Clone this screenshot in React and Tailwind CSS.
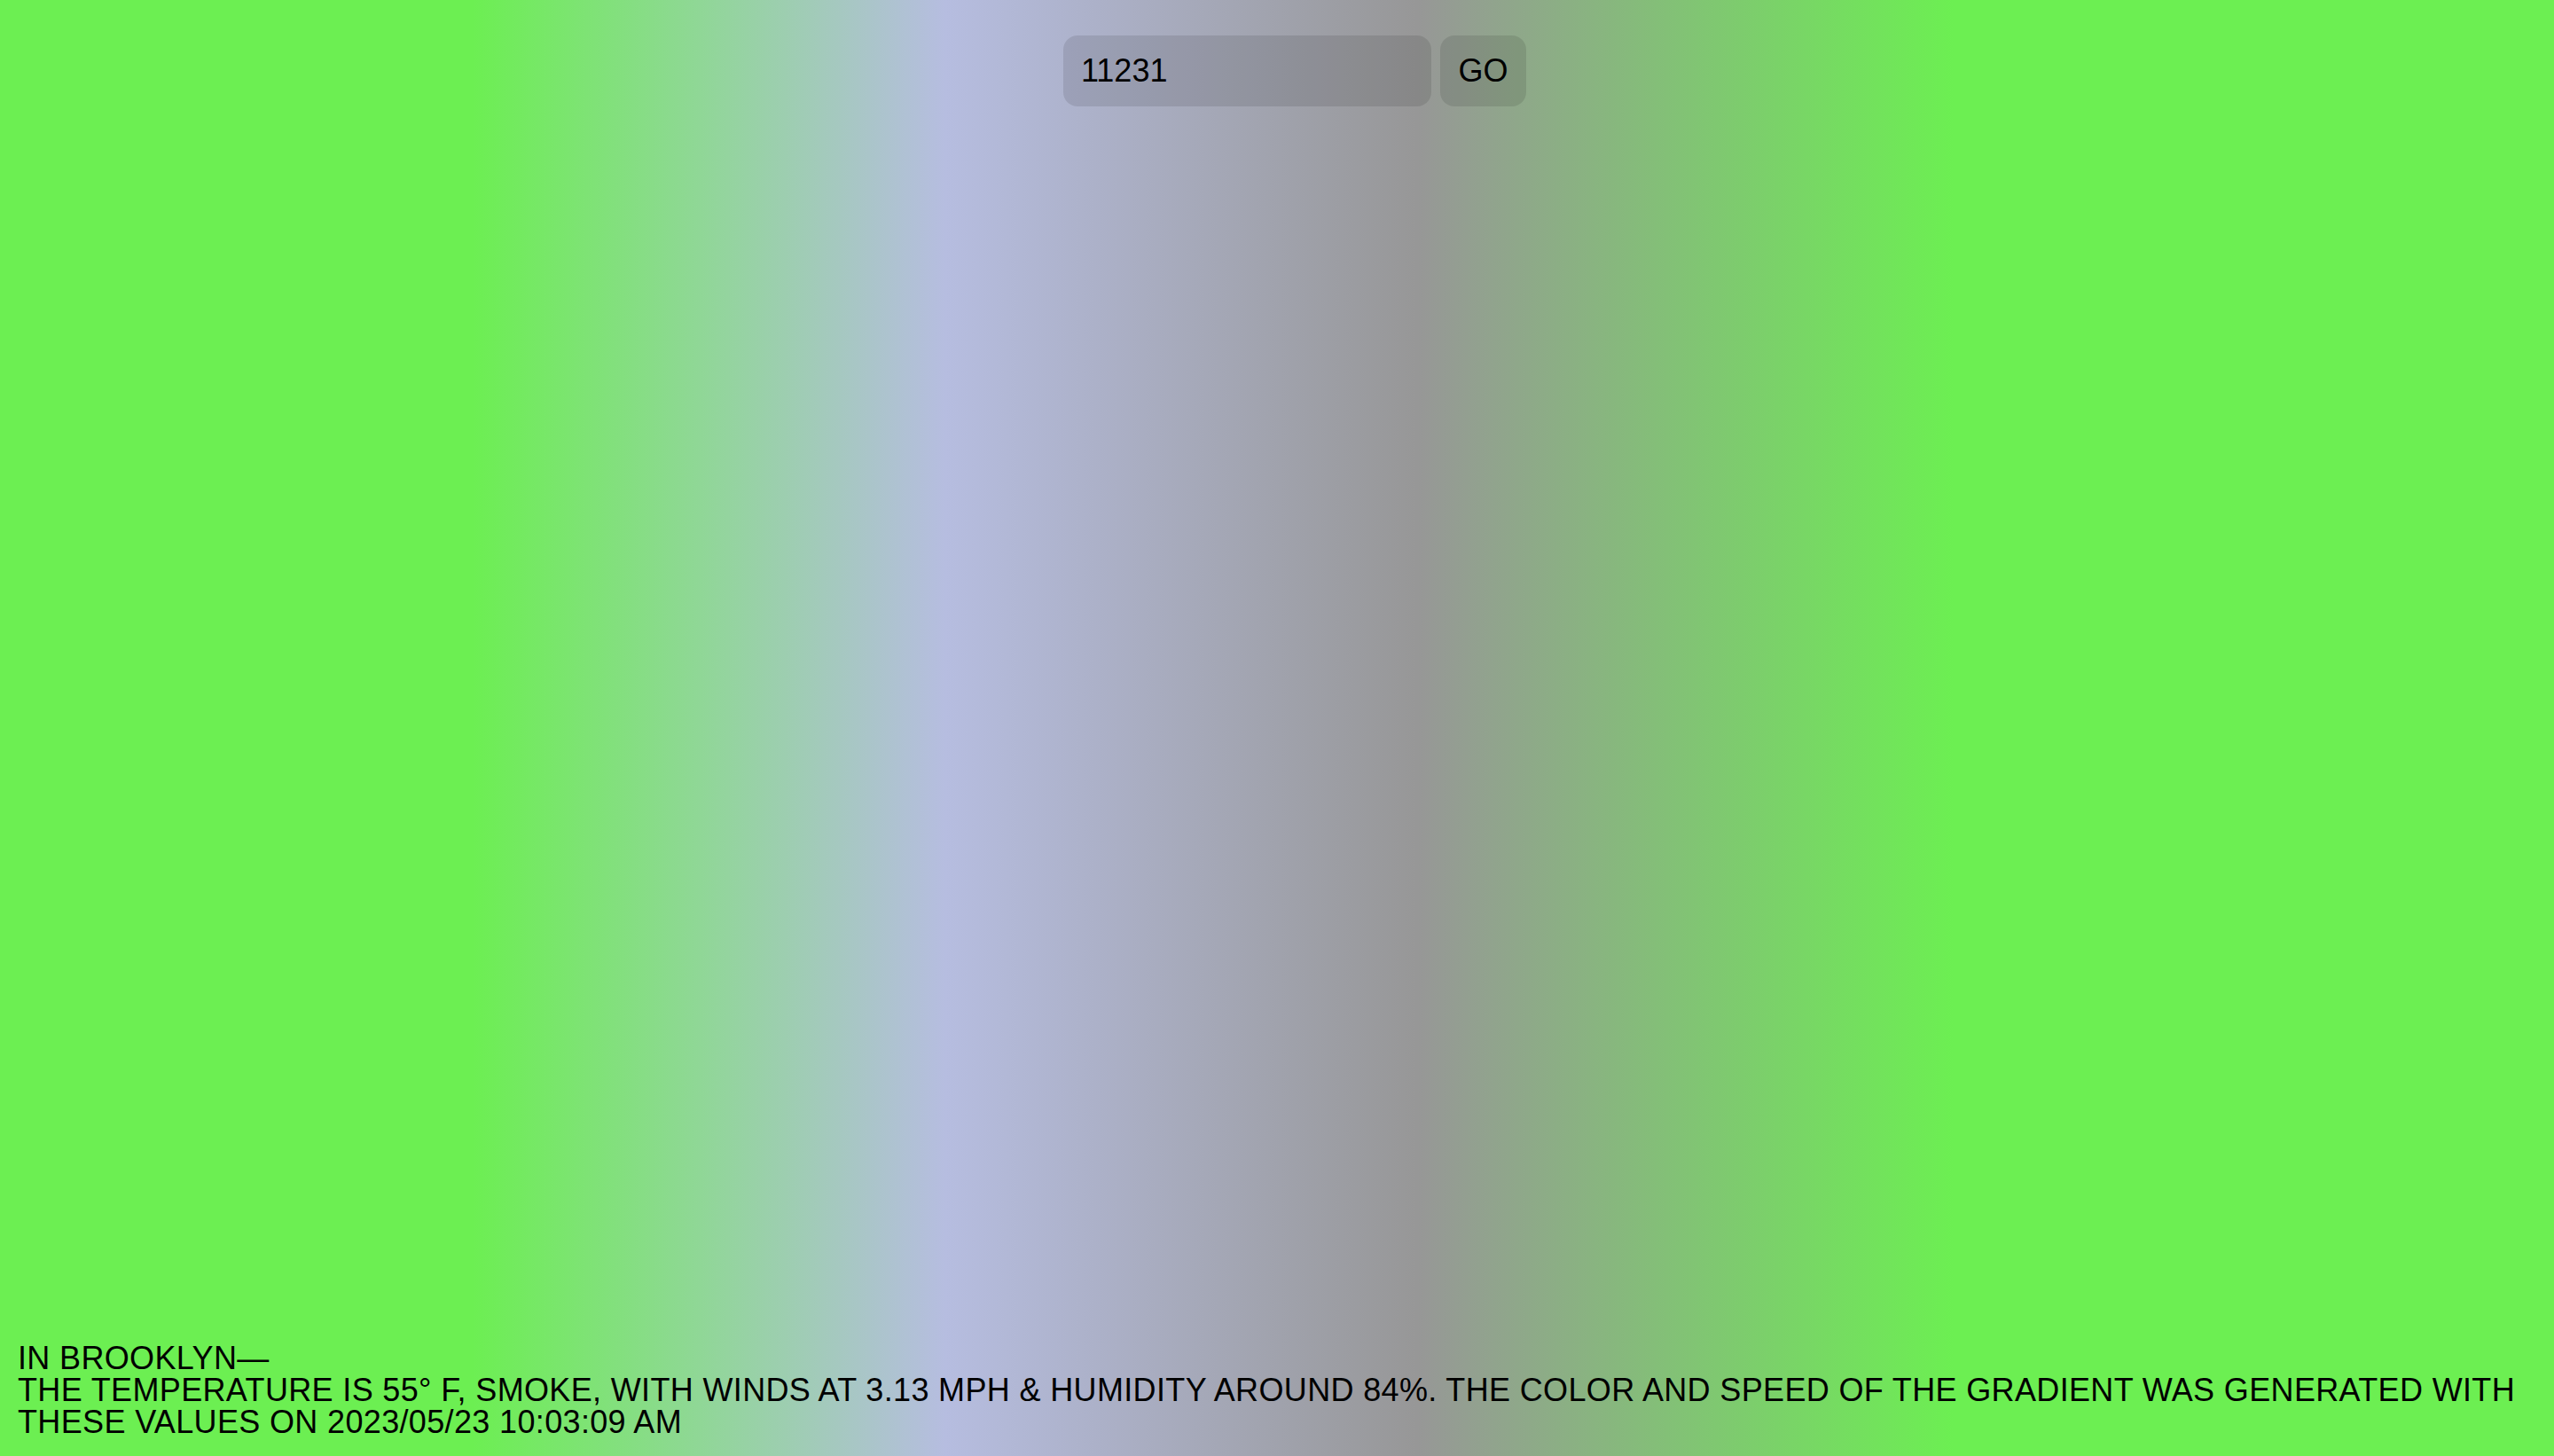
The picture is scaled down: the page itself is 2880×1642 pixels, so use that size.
export default function App() {
  return (
    <div
      className="flex h-screen w-full flex-col justify-between bg-[linear-gradient(90deg,#6cef52_18.5%,#b6bde0_37%,#979797_55.5%,#6cef52_76.5%)] font-['Liberation_Sans',Arial,sans-serif] text-black"
    >
      <form className="mt-[40px] flex justify-center gap-[10px] pl-[40px]" onSubmit={(e) => e.preventDefault()}>
        <input
          className="h-[80px] w-[415px] rounded-[16px] bg-black/10 px-[20px] text-[36px] text-black outline-none"
          defaultValue="11231"
        />
        <button
          type="submit"
          className="h-[80px] w-[97px] rounded-[16px] bg-black/10 text-[36px] text-black"
        >
          GO
        </button>
      </form>

      <div className="px-[20px] pb-[20px] text-[36px] leading-none tracking-[0.35px]">
        <div>IN BROOKLYN—</div>
        <div>
          THE TEMPERATURE IS 55° F, SMOKE, WITH WINDS AT 3.13 MPH &amp; HUMIDITY AROUND 84%. THE COLOR AND SPEED OF
          THE GRADIENT WAS GENERATED WITH THESE VALUES ON 2023/05/23 10:03:09 AM
        </div>
      </div>
    </div>
  )
}
